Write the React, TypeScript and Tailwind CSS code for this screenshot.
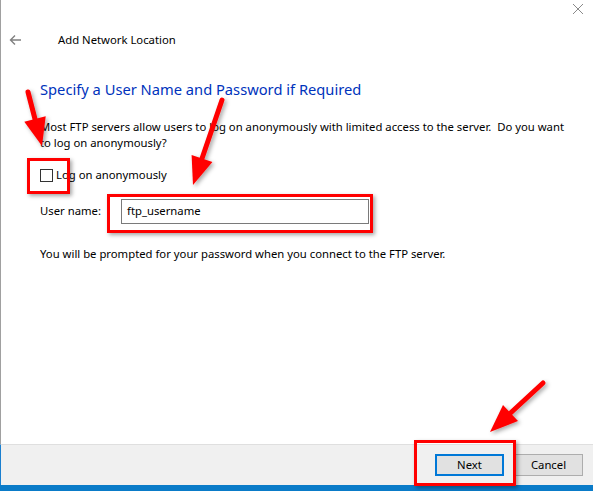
import React from 'react';

const font = { fontFamily: '"Noto Sans", "Open Sans", sans-serif' };

// red annotation arrows drawn over the dialog
function Arrows() {
  const arrows = [
    { from: [28, 92], base: [35, 119], a: [45.7, 116.3], b: [24.3, 121.7], tip: [42, 146] },
    { from: [222, 100], base: [202, 158.5], a: [212.4, 162], b: [191.6, 155], tip: [193, 185] },
    { from: [543, 383], base: [510.5, 413], a: [518, 421], b: [503, 405], tip: [490, 432] },
  ];
  return (
    <svg className="absolute inset-0 pointer-events-none" width={593} height={491}>
      <defs>
        <filter id="sh" x="-50%" y="-50%" width="200%" height="200%">
          <feDropShadow dx="2" dy="2" stdDeviation="2" floodColor="#000" floodOpacity="0.35" />
        </filter>
      </defs>
      {arrows.map((ar, i) => (
        <g key={i} filter="url(#sh)">
          <line x1={ar.from[0]} y1={ar.from[1]} x2={ar.base[0]} y2={ar.base[1]} stroke="#f00" strokeWidth={5} strokeLinecap="round" />
          <polygon points={`${ar.a.join(',')} ${ar.b.join(',')} ${ar.tip.join(',')}`} fill="#f00" />
        </g>
      ))}
    </svg>
  );
}

export default function App() {
  return (
    <div className="relative w-[593px] h-[491px] bg-white flex flex-col overflow-hidden text-[11.3px] text-black" style={font}>
      <div className="flex-1 flex flex-col border-l border-[#a0a0a0]">
        {/* title bar */}
        <div className="flex justify-end h-[20px] pr-[9px] pt-[3px]">
          <svg width="12" height="12" viewBox="0 0 12 12">
            <path d="M1 1 L11 11 M11 1 L1 11" stroke="#8a8a8a" strokeWidth="1" />
          </svg>
        </div>

        {/* header */}
        <div className="flex items-center h-[20px] mt-[10px]">
          <svg className="ml-[8px]" width="13" height="12" viewBox="0 0 13 12">
            <path d="M12 6 H1.5 M6 1.5 L1.5 6 L6 10.5" stroke="#808080" strokeWidth="1.4" fill="none" />
          </svg>
          <span className="ml-[36px] text-[11.3px]">Add Network Location</span>
        </div>

        <div className="pl-[39px] pr-[20px]">
          <h1 className="mt-[29px] text-[14.7px] leading-[20px] text-[#0033bc]">
            Specify a User Name and Password if Required
          </h1>

          <p className="mt-[20px] leading-[16px] whitespace-nowrap">
            Most FTP servers allow users to log on anonymously with limited access to the server.&nbsp; Do you want
            <br />
            to log on anonymously?
          </p>

          <label className="mt-[16px] flex items-center h-[16px]">
            <span className="w-[13px] h-[13px] border border-[#333] bg-white" />
            <span className="ml-[3px]">Log on anonymously</span>
          </label>

          <div className="mt-[16px] flex items-center">
            <span className="w-[81px]">User name:</span>
            <div className="w-[248px] h-[25px] border border-[#7a7a7a] flex items-center pl-[5px]">
              ftp_username
            </div>
          </div>

          <p className="mt-[22px] leading-[16px]">You will be prompted for your password when you connect to the FTP server.</p>
        </div>
      </div>

      {/* footer */}
      <div className="h-[41px] bg-[#f0f0f0] border-t border-[#dfdfdf] border-l border-l-[#1a7fcf] flex items-center justify-end gap-[10px] pr-[10px]">
        <button className="w-[69px] h-[22px] bg-[#e1e1e1] border-2 border-[#0078d7] text-[11.3px] leading-none">Next</button>
        <button className="w-[69px] h-[22px] bg-[#e1e1e1] border border-[#adadad] text-[11.3px] leading-none">Cancel</button>
      </div>
      <div className="h-[6px] bg-[#0a7bc8]" />

      {/* annotation boxes */}
      <div className="absolute left-[27px] top-[158px] w-[43px] h-[36px] border-[3px] border-[#f00] shadow-[2px_2px_4px_rgba(0,0,0,0.35)] pointer-events-none" />
      <div className="absolute left-[107px] top-[194px] w-[266px] h-[39px] border-[3px] border-[#f00] shadow-[2px_2px_4px_rgba(0,0,0,0.35)] pointer-events-none" />
      <div className="absolute left-[414px] top-[440px] w-[102px] h-[46px] border-[3px] border-[#f00] shadow-[2px_2px_4px_rgba(0,0,0,0.35)] pointer-events-none" />

      <Arrows />
    </div>
  );
}
